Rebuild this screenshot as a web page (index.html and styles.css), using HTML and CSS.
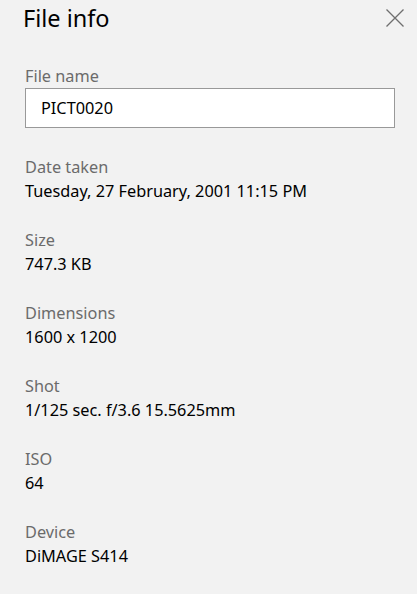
FILE: index.html
```html
<!DOCTYPE html>
<html lang="en">
<head>
<meta charset="utf-8">
<title>File info</title>
<link rel="stylesheet" href="styles.css">
</head>
<body>
<div class="panel">
  <header class="header">
    <h1 class="title">File info</h1>
    <button class="close" aria-label="Close">
      <svg width="18" height="18" viewBox="0 0 18 18"><path d="M0.5 0.5 L17.5 17.5 M17.5 0.5 L0.5 17.5" stroke="#6f6f6f" stroke-width="1.3" fill="none"/></svg>
    </button>
  </header>
  <div class="content">
    <div class="field filename">
      <div class="label">File name</div>
      <div class="input">PICT0020</div>
    </div>
    <div class="field">
      <div class="label">Date taken</div>
      <div class="value">Tuesday, 27 February, 2001 11:15 PM</div>
    </div>
    <div class="field">
      <div class="label">Size</div>
      <div class="value">747.3 KB</div>
    </div>
    <div class="field">
      <div class="label">Dimensions</div>
      <div class="value">1600 x 1200</div>
    </div>
    <div class="field">
      <div class="label">Shot</div>
      <div class="value">1/125 sec. f/3.6 15.5625mm</div>
    </div>
    <div class="field">
      <div class="label">ISO</div>
      <div class="value">64</div>
    </div>
    <div class="field">
      <div class="label">Device</div>
      <div class="value">DiMAGE S414</div>
    </div>
  </div>
</div>
</body>
</html>
```
FILE: styles.css
```css
html, body {
  margin: 0;
  padding: 0;
  background: #f2f2f2;
}
body {
  font-family: "Noto Sans", "Open Sans", sans-serif;
  color: #000;
  width: 417px;
  height: 594px;
  overflow: hidden;
}
.panel {
  display: flex;
  flex-direction: column;
}
.header {
  display: flex;
  justify-content: space-between;
  align-items: flex-start;
  padding: 2px 13px 0 23px;
}
.title {
  margin: 0;
  font-size: 23.5px;
  line-height: 32px;
  font-weight: 400;
}
.close {
  border: 0;
  background: transparent;
  padding: 0;
  margin-top: 7px;
  width: 18px;
  height: 18px;
  display: flex;
}
.content {
  display: flex;
  flex-direction: column;
  gap: 25px;
  padding: 30px 22px 0 25px;
}
.field {
  display: flex;
  flex-direction: column;
}
.filename {
  margin-bottom: 2px;
}
.label {
  font-size: 16.3px;
  line-height: 24px;
  color: #6b6b6b;
}
.value {
  font-size: 16.3px;
  line-height: 24px;
  color: #000;
}
.input {
  box-sizing: border-box;
  height: 40px;
  border: 1px solid #999;
  background: #fff;
  font-size: 16.3px;
  line-height: 24px;
  padding: 7px 15px 7px 15px;
}
```
